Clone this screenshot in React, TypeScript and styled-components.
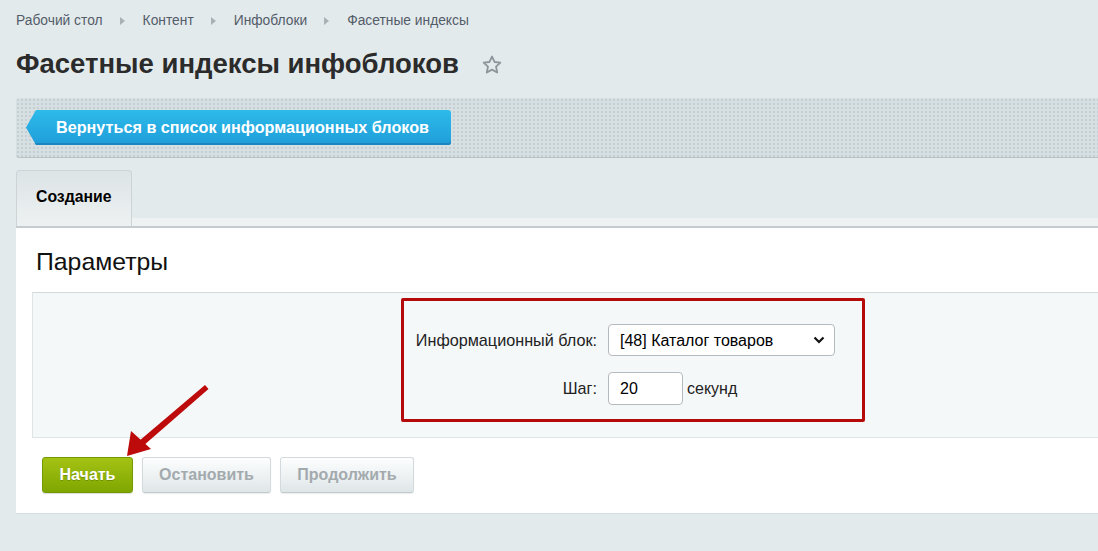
import React from 'react';
import styled, { createGlobalStyle } from 'styled-components';

const GlobalStyle = createGlobalStyle`
  html, body {
    margin: 0;
    padding: 0;
    background: #e3eaec;
  }
  body {
    font-family: "Liberation Sans", Arial, sans-serif;
  }
`;

const Page = styled.div`
  position: relative;
  width: 1098px;
  height: 551px;
  overflow: hidden;
  box-sizing: border-box;
  padding-left: 16px;
  background: #e3eaec;
`;

const Crumbs = styled.nav`
  display: flex;
  align-items: center;
  height: 15px;
  margin-top: 13px;
  font-size: 13.8px;
  color: #535c69;
`;

const Crumb = styled.span`
  white-space: nowrap;
`;

const CrumbSep = styled.span`
  width: 0;
  height: 0;
  border-left: 5px solid #a9b1b5;
  border-top: 4px solid transparent;
  border-bottom: 4px solid transparent;
  margin: 0 18px 0 17px;
`;

const TitleRow = styled.div`
  display: flex;
  align-items: center;
  height: 32px;
  margin-top: 20px;
`;

const Title = styled.h1`
  margin: 0;
  font-size: 27.5px;
  font-weight: bold;
  color: #2b2b2b;
  white-space: nowrap;
`;

const StarIcon = styled.svg`
  margin-left: 22px;
  margin-top: 2px;
`;

const Toolbar = styled.div`
  margin-top: 18px;
  height: 60px;
  box-sizing: border-box;
  padding: 12px 0 0 10px;
  border-radius: 3px 0 0 3px;
  border-bottom: 1px solid #b9c3c7;
  background-color: #d6dfe2;
  background-image: radial-gradient(#c5cfd3 0.8px, transparent 1px);
  background-size: 4px 4px;
`;

const BackButton = styled.button`
  display: flex;
  align-items: center;
  height: 35px;
  box-sizing: border-box;
  padding: 0 22px 1px 30px;
  border: none;
  border-radius: 0 3px 3px 0;
  clip-path: polygon(10px 0, 100% 0, 100% 100%, 10px 100%, 0 50%);
  background: linear-gradient(#2dbbea, #1f9dd9);
  box-shadow: inset 0 -2px 0 #1b86bf;
  color: #fff;
  font-family: inherit;
  font-size: 16.2px;
  font-weight: bold;
  white-space: nowrap;
  cursor: pointer;
`;

const TabBar = styled.div`
  display: flex;
  align-items: flex-end;
  margin-top: 12px;
  border-bottom: 2px solid #c4ccd0;
`;

const Tab = styled.div`
  display: flex;
  align-items: center;
  width: 116px;
  height: 56px;
  box-sizing: border-box;
  padding: 0 0 4px 19px;
  border: 1px solid #ccd4d7;
  border-bottom: none;
  border-radius: 4px 4px 0 0;
  background: linear-gradient(#dde4e6, #edf1f2);
  font-size: 15.8px;
  font-weight: bold;
  color: #000;
`;

const TabFill = styled.div`
  flex: 1;
  height: 8px;
  background: #eef2f3;
`;

const Panel = styled.section`
  background: #fff;
  padding: 21px 0 20px 16px;
  border-bottom: 1px solid #d7dee1;
`;

const SectionTitle = styled.h2`
  margin: 0 0 17px 4px;
  font-size: 24.8px;
  line-height: 26px;
  font-weight: normal;
  color: #111;
`;

const FormArea = styled.div`
  padding: 5px 0 15px 368px;
  background: #f5f8f9;
  border-top: 1px solid #d2d9dc;
  border-bottom: 1px solid #dfe5e7;
  border-left: 1px solid #dfe5e7;
`;

const HighlightBox = styled.div`
  display: grid;
  grid-template-columns: 193px auto;
  column-gap: 11px;
  row-gap: 16px;
  align-items: center;
  align-content: start;
  width: 464px;
  height: 124px;
  box-sizing: border-box;
  padding: 23px 0 0;
  border: 3px solid #b40a0a;
  border-radius: 2px;
`;

const FieldLabel = styled.label`
  text-align: right;
  font-size: 16.2px;
  color: #222;
  white-space: nowrap;
`;

const FieldControls = styled.div`
  display: flex;
  align-items: center;
  gap: 4px;
`;

const SelectWrap = styled.div`
  position: relative;
  width: 227px;
  height: 32px;
`;

const Select = styled.select`
  appearance: none;
  width: 100%;
  height: 100%;
  box-sizing: border-box;
  padding: 0 30px 0 11px;
  border: 1px solid #b5babe;
  border-radius: 4px;
  background: #fff;
  font-family: inherit;
  font-size: 16px;
  color: #000;
`;

const Chevron = styled.svg`
  position: absolute;
  right: 10px;
  top: 12px;
  pointer-events: none;
`;

const NumberInput = styled.input`
  width: 75px;
  height: 33px;
  box-sizing: border-box;
  padding: 0 11px;
  border: 1px solid #b5babe;
  border-radius: 4px;
  background: #fff;
  font-family: inherit;
  font-size: 16px;
  color: #000;
`;

const Unit = styled.span`
  font-size: 16px;
  color: #222;
`;

const Actions = styled.div`
  display: flex;
  gap: 9px;
  margin: 19px 0 0 10px;
`;

const ActionButton = styled.button<{ $primary?: boolean; $w: number }>`
  width: ${(p) => p.$w}px;
  height: 36px;
  box-sizing: border-box;
  border-radius: 3px;
  font-family: inherit;
  font-size: 16px;
  font-weight: bold;
  cursor: pointer;
  ${(p) =>
    p.$primary
      ? `
    border: 1px solid #739a00;
    background: linear-gradient(#a4c214, #7fa600);
    color: #fff;
    text-shadow: 0 1px 0 rgba(60, 80, 0, 0.35);
    box-shadow: 0 1px 1px rgba(0, 0, 0, 0.15);
  `
      : `
    border: 1px solid #d3dadd;
    border-bottom-color: #c3cbcf;
    background: linear-gradient(#fdfefe, #dfe6e8);
    color: #a3aaae;
    box-shadow: 0 1px 1px rgba(0, 0, 0, 0.08);
  `}
`;

const Pointer = styled.svg`
  position: absolute;
  left: 0;
  top: 0;
  pointer-events: none;
`;

export default function App() {
  return (
    <>
      <GlobalStyle />
      <Page>
        <Crumbs>
          <Crumb>Рабочий стол</Crumb>
          <CrumbSep />
          <Crumb>Контент</Crumb>
          <CrumbSep />
          <Crumb>Инфоблоки</Crumb>
          <CrumbSep />
          <Crumb>Фасетные индексы</Crumb>
        </Crumbs>

        <TitleRow>
          <Title>Фасетные индексы инфоблоков</Title>
          <StarIcon width="22" height="22" viewBox="0 0 24 24">
            <path
              d="M12 2.8l2.75 5.9 6.35.75-4.7 4.4 1.25 6.3L12 17l-5.65 3.15 1.25-6.3-4.7-4.4 6.35-.75z"
              fill="none"
              stroke="#8c959a"
              strokeWidth="2"
              strokeLinejoin="round"
            />
          </StarIcon>
        </TitleRow>

        <Toolbar>
          <BackButton>Вернуться в список информационных блоков</BackButton>
        </Toolbar>

        <TabBar>
          <Tab>Создание</Tab>
          <TabFill />
        </TabBar>

        <Panel>
          <SectionTitle>Параметры</SectionTitle>
          <FormArea>
            <HighlightBox>
              <FieldLabel htmlFor="iblock">Информационный блок:</FieldLabel>
              <FieldControls>
                <SelectWrap>
                  <Select id="iblock" defaultValue="48">
                    <option value="48">[48] Каталог товаров</option>
                  </Select>
                  <Chevron width="12" height="8" viewBox="0 0 12 8">
                    <path d="M1.5 1.5L6 6l4.5-4.5" fill="none" stroke="#111" strokeWidth="2.2" />
                  </Chevron>
                </SelectWrap>
              </FieldControls>
              <FieldLabel htmlFor="step">Шаг:</FieldLabel>
              <FieldControls>
                <NumberInput id="step" defaultValue="20" />
                <Unit>секунд</Unit>
              </FieldControls>
            </HighlightBox>
          </FormArea>
          <Actions>
            <ActionButton $primary $w={91}>Начать</ActionButton>
            <ActionButton $w={129}>Остановить</ActionButton>
            <ActionButton $w={134}>Продолжить</ActionButton>
          </Actions>
        </Panel>

        <Pointer width="1098" height="551" viewBox="0 0 1098 551">
          <polygon points="205,385 208.5,389 143,446 139,441" fill="#bd0a0a" />
          <polygon points="127,456 131,431 151,449" fill="#bd0a0a" />
        </Pointer>
      </Page>
    </>
  );
}
